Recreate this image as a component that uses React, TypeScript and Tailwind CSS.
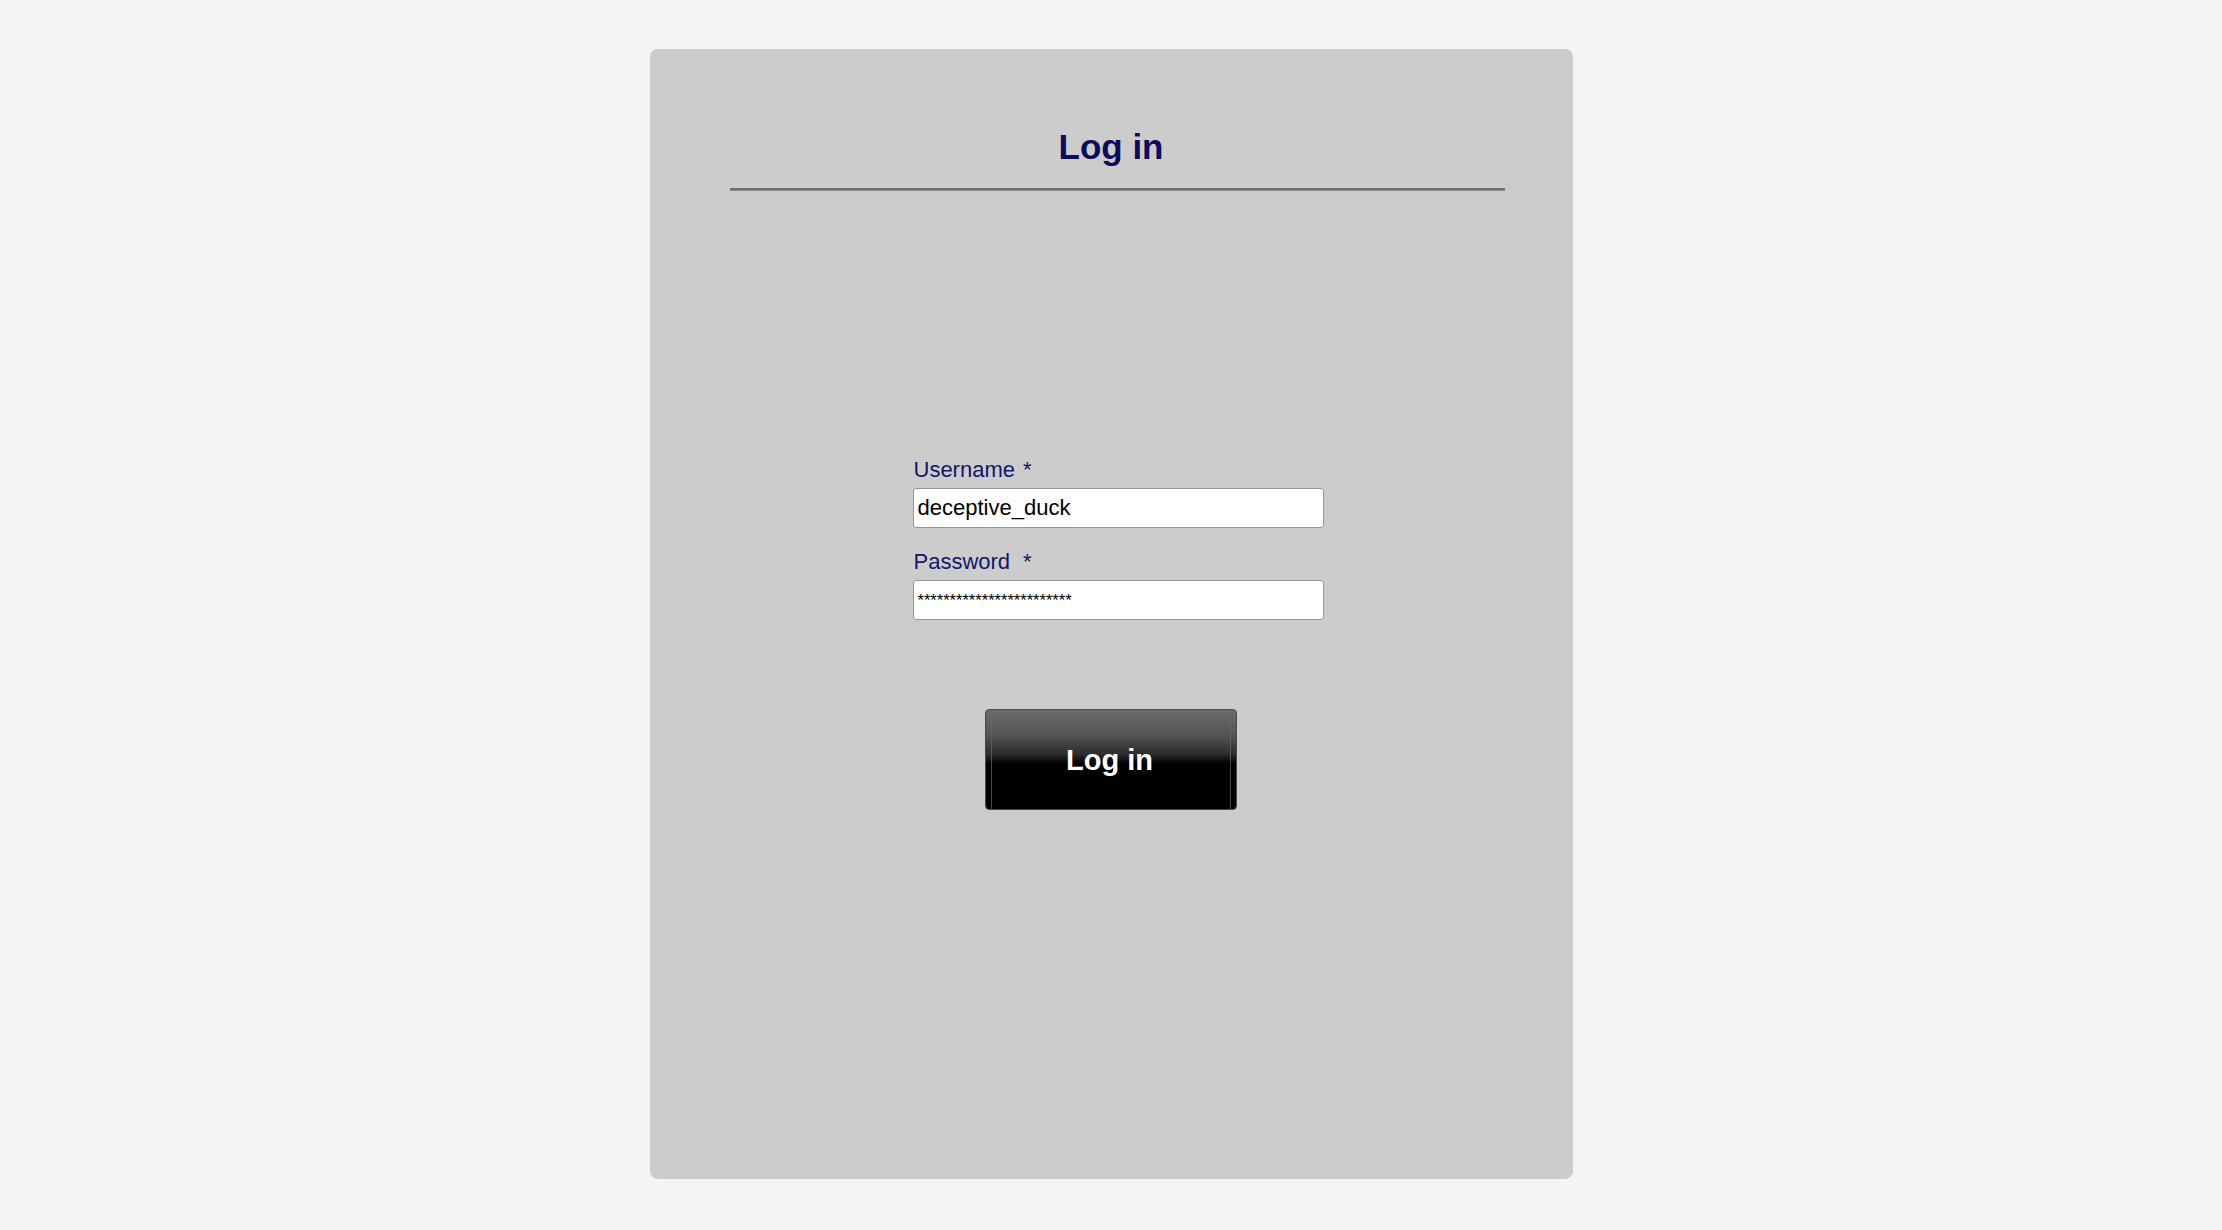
import React from 'react';

const font = { fontFamily: '"Liberation Sans", Arial, sans-serif' };

function Field({ label, gap, value, small }: { label: string; gap: string; value: string; small?: boolean }) {
  return (
    <div className="flex flex-col">
      <label className="flex h-[22px] pl-[1px] text-[22px] leading-none text-[#15156b]">
        <span>{label}</span>
        <span className={gap}>*</span>
      </label>
      <input
        readOnly
        value={value}
        className={`mt-[7px] h-[40px] w-[411px] rounded-[3px] border border-[#9a968c] bg-white px-[4px] text-black outline-none ${
          small ? 'text-[16.5px]' : 'text-[22px]'
        }`}
        style={font}
      />
    </div>
  );
}

export default function App() {
  return (
    <div className="min-h-screen bg-[#f4f4f6] pt-[49px]" style={font}>
      <div className="mx-auto flex h-[1130px] w-[923px] flex-col rounded-[8px] bg-[#cccccc]">
        <h1 className="mt-[80px] h-[35px] text-center text-[35px] font-bold leading-none text-[#0b0b5c]">
          Log in
        </h1>
        <div className="ml-[80px] mr-[68px] mt-[24px] h-[3px] border-t-2 border-b border-t-[#6e6e6e] border-b-[#8c8c8c]" />

        <div className="ml-[263px] mt-[268px] flex flex-col gap-[23px]">
          <Field label="Username" gap="ml-[8px]" value="deceptive_duck" />
          <Field label="Password" gap="ml-[13px]" value={'*'.repeat(24)} small />
        </div>

        <div className="mt-[89px] flex justify-center">
          <button className="flex h-[101px] w-[252px] rounded-[4px] border border-[#4a4a4a] bg-[linear-gradient(to_bottom,#6c6c6c_0%,#555555_25%,#2c2c2c_45%,#000000_54%,#000000_100%)] px-[5px]">
            <span className="flex h-full w-full items-center justify-center border-x border-x-[#6a6a6a]/70 pt-[2px] pr-[3px] text-[29px] font-bold text-white">
              Log in
            </span>
          </button>
        </div>
      </div>
    </div>
  );
}
